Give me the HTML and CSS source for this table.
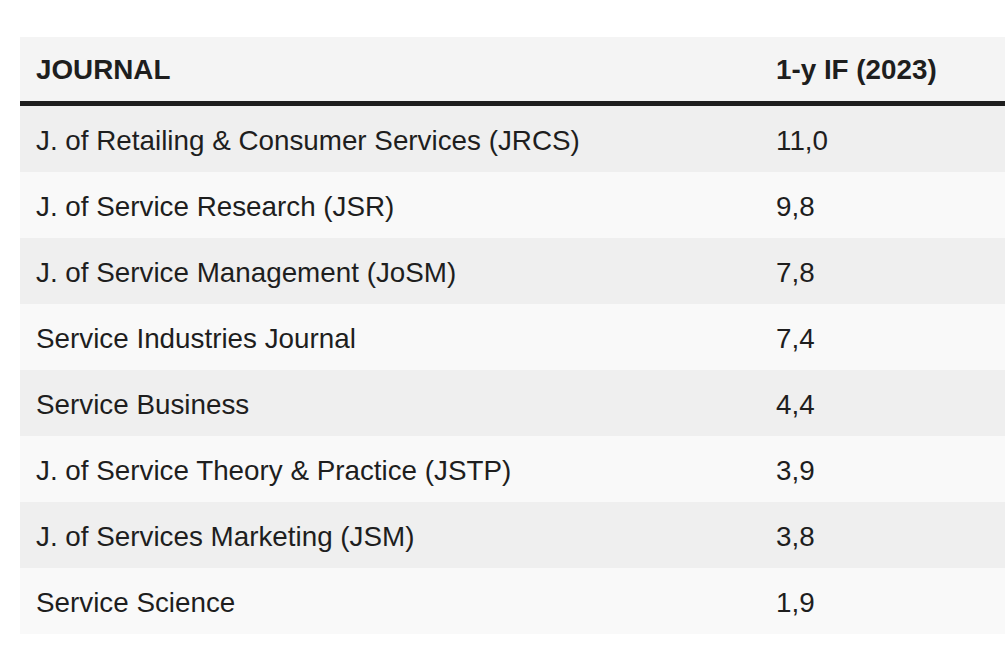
FILE: index.html
```html
<!DOCTYPE html>
<html>
<head>
<meta charset="utf-8">
<link rel="stylesheet" href="styles.css">
</head>
<body>
<div class="page">
  <table class="if-table">
    <thead>
      <tr><th class="col-journal">JOURNAL</th><th>1-y IF (2023)</th></tr>
    </thead>
    <tbody>
      <tr><td>J. of Retailing &amp; Consumer Services (JRCS)</td><td>11,0</td></tr>
      <tr><td>J. of Service Research (JSR)</td><td>9,8</td></tr>
      <tr><td>J. of Service Management (JoSM)</td><td>7,8</td></tr>
      <tr><td>Service Industries Journal</td><td>7,4</td></tr>
      <tr><td>Service Business</td><td>4,4</td></tr>
      <tr><td>J. of Service Theory &amp; Practice (JSTP)</td><td>3,9</td></tr>
      <tr><td>J. of Services Marketing (JSM)</td><td>3,8</td></tr>
      <tr><td>Service Science</td><td>1,9</td></tr>
    </tbody>
  </table>
</div>
</body>
</html>
```
FILE: styles.css
```css
html, body {
  margin: 0;
  padding: 0;
  background: #ffffff;
  overflow: hidden;
}
.page {
  padding: 37px 0 0 20px;
  font-family: "Liberation Sans", Arial, sans-serif;
  color: #1e1e1e;
}
.if-table {
  width: 985px;
  border-collapse: collapse;
  table-layout: fixed;
  font-size: 27.8px;
}
.if-table th,
.if-table td {
  text-align: left;
  line-height: 32px;
  white-space: nowrap;
}
.if-table th {
  font-weight: bold;
  padding: 2px 16px 0;
  height: 62px;
  background: #f4f4f4;
  border-bottom: 5px solid #1e1e1e;
}
.if-table .col-journal {
  width: 708px;
}
.if-table td {
  padding: 4px 16px 0;
  height: 62px;
}
.if-table tbody tr:nth-child(odd) td {
  background: #efefef;
}
.if-table tbody tr:nth-child(even) td {
  background: #f9f9f9;
}
```
